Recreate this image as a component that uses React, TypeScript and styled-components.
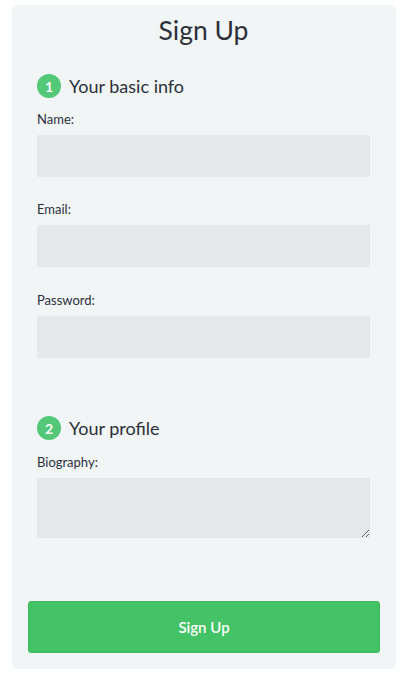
import React from 'react';
import styled, { createGlobalStyle } from 'styled-components';

const GlobalStyle = createGlobalStyle`
  body {
    margin: 0;
    background: #ffffff;
    font-family: 'Lato', 'Open Sans', sans-serif;
    color: #2b303a;
  }
`;

const Card = styled.form`
  box-sizing: border-box;
  width: 384px;
  margin: 5px 0 0 12px;
  padding: 9px 26px 16px 25px;
  background: #f1f5f6;
  border-radius: 6px;
  display: flex;
  flex-direction: column;
`;

const Title = styled.h1`
  margin: 0 0 28px;
  font-size: 26.5px;
  line-height: 32px;
  font-weight: 400;
  text-align: center;
`;

const SectionHeading = styled.h2<{ $gap?: number }>`
  display: flex;
  align-items: center;
  gap: 8px;
  margin: 0 0 ${(p) => p.$gap ?? 12}px;
  height: 24px;
  font-size: 18px;
  font-weight: 400;
`;

const Badge = styled.span`
  width: 24px;
  height: 24px;
  border-radius: 50%;
  background: #52c878;
  color: #fff;
  font-size: 14px;
  font-weight: 700;
  display: flex;
  align-items: center;
  justify-content: center;
`;

const Field = styled.div<{ $gap?: number }>`
  display: flex;
  flex-direction: column;
  margin-bottom: ${(p) => p.$gap ?? 23}px;
`;

const Label = styled.label`
  font-size: 13px;
  line-height: 18px;
  margin-bottom: 7px;
`;

const Input = styled.input`
  box-sizing: border-box;
  height: 42px;
  border: none;
  background: #e4e8ea;
  padding: 0 10px;
  font: inherit;
  outline: none;
`;

const TextArea = styled.textarea`
  box-sizing: border-box;
  height: 60px;
  border: none;
  background: #e4e8ea;
  padding: 8px 10px;
  font: inherit;
  outline: none;
`;

const SubmitButton = styled.button`
  box-sizing: border-box;
  height: 52px;
  margin: 0 -10px 0 -9px;
  border: 1px solid #3cb85f;
  border-radius: 3px;
  background: #43c366;
  color: #fff;
  font-family: inherit;
  font-size: 15px;
  font-weight: 600;
  cursor: pointer;
`;

export default function App() {
  return (
    <>
      <GlobalStyle />
      <Card onSubmit={(e) => e.preventDefault()}>
        <Title>Sign Up</Title>

        <SectionHeading>
          <Badge>1</Badge>Your basic info
        </SectionHeading>
        <Field>
          <Label>Name:</Label>
          <Input type="text" />
        </Field>
        <Field $gap={24}>
          <Label>Email:</Label>
          <Input type="email" />
        </Field>
        <Field $gap={58}>
          <Label>Password:</Label>
          <Input type="password" />
        </Field>

        <SectionHeading $gap={13}>
          <Badge>2</Badge>Your profile
        </SectionHeading>
        <Field $gap={63}>
          <Label>Biography:</Label>
          <TextArea />
        </Field>

        <SubmitButton type="submit">Sign Up</SubmitButton>
      </Card>
    </>
  );
}
